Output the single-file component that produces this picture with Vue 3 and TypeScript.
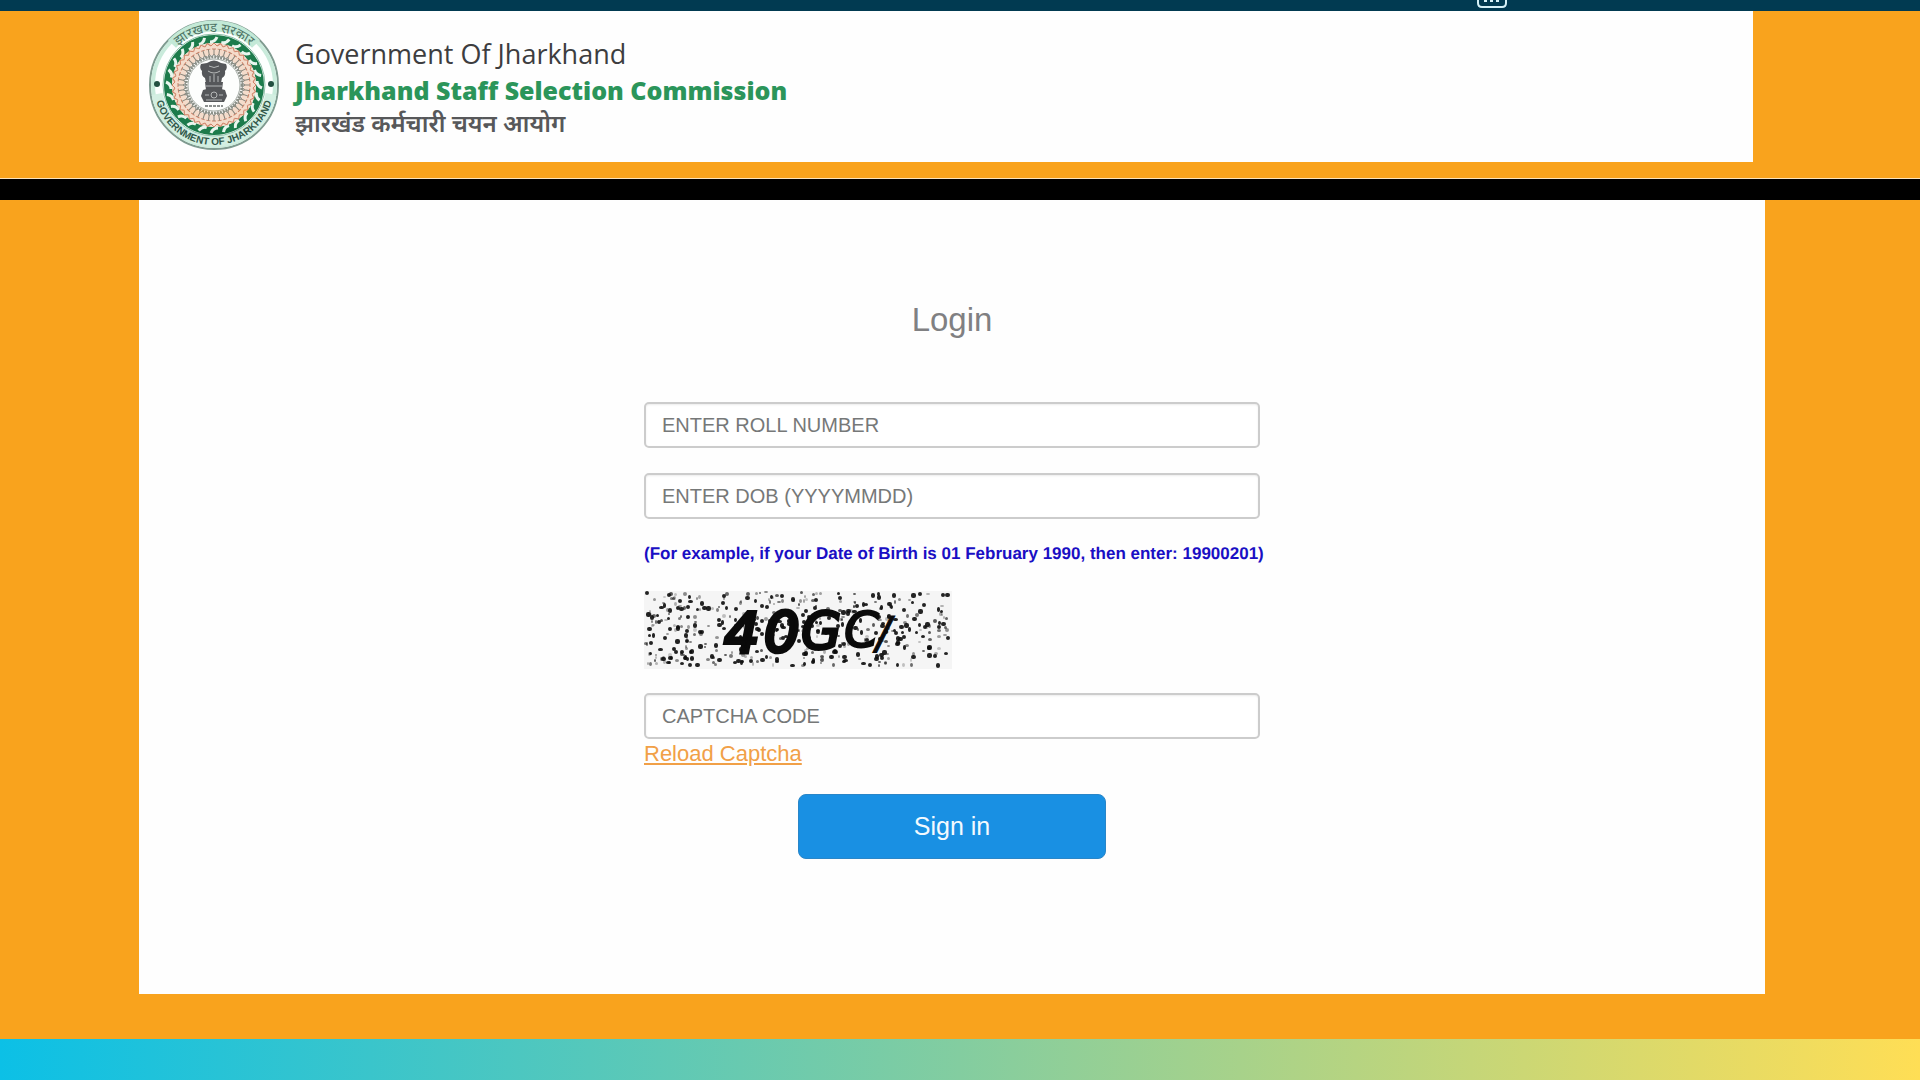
<script setup lang="ts">
import { ref } from 'vue'

interface Speck {
  x: number
  y: number
  w: number
  h: number
  o: number
}

interface Glyph {
  char: string
  x: number
  y: number
  size: number
  stroke: number
}

const roll = ref('')
const dob = ref('')
const code = ref('')

const glyphs: Glyph[] = [
  { char: '4', x: 80, y: 61, size: 56, stroke: 4 },
  { char: '0', x: 120, y: 60, size: 56, stroke: 4 },
  { char: 'G', x: 157, y: 58, size: 52, stroke: 3 },
  { char: 'C', x: 200, y: 56, size: 50, stroke: 2 },
  { char: '/', x: 232, y: 58, size: 44, stroke: 1 },
]

// Noise for the captcha background, from a small seeded generator.
function makeSpecks(seed: number): Speck[] {
  let s = seed
  const next = () => {
    s = (s * 1103515245 + 12345) % 2147483648
    return s / 2147483648
  }
  const list: Speck[] = []
  for (let i = 0; i < 480; i++) {
    const big = next() > 0.55
    list.push({
      x: Math.round(next() * 303),
      y: Math.round(next() * 73),
      w: (big ? 3 : 2) + Math.round(next() * 2),
      h: (big ? 3 : 2) + Math.round(next() * 2),
      o: big ? 0.9 : 0.2 + next() * 0.5,
    })
  }
  return list
}

const seed = ref(4061)
const specks = ref<Speck[]>(makeSpecks(seed.value))

function reload() {
  seed.value += 97
  specks.value = makeSpecks(seed.value)
}

const ticks = Array.from({ length: 24 }, (_, i) => i * 15)
const petals = Array.from({ length: 40 }, (_, i) => i * 9)
</script>

<template>
  <div class="page">
    <div class="topbar">
      <svg class="keypad" width="34" height="11" viewBox="0 0 34 11" aria-hidden="true">
        <path d="M2 -6V3q0 4 4 4H26q4 0 4-4V-6" fill="none" stroke="#d5f1f7" stroke-width="2" />
        <path d="M8 1h3M14 1h3M20 1h3" stroke="#d5f1f7" stroke-width="2" />
      </svg>
    </div>

    <header class="masthead">
      <div class="brand">
        <svg class="seal" viewBox="0 0 132 132" role="img" aria-label="Seal of Jharkhand">
          <defs>
            <path id="arc-top" d="M13 66A53 53 0 0 1 119 66" />
            <path id="arc-bottom" d="M6 66A60 60 0 0 0 126 66" />
          </defs>
          <circle cx="66" cy="66" r="64" fill="#fdfffe" stroke="#7f9b90" stroke-width="2" />
          <circle cx="66" cy="66" r="61" fill="none" stroke="#c9ebdb" stroke-width="4" />
          <path d="M24 25A58 58 0 0 1 108 25" fill="none" stroke="#c3e9d7" stroke-width="11" />
          <path d="M9 75A58 58 0 0 0 123 75" fill="none" stroke="#d3efe2" stroke-width="11" />
          <circle cx="66" cy="66" r="51" fill="none" stroke="#8fc0aa" stroke-width="1" />
          <circle cx="66" cy="66" r="46" fill="#fff" stroke="#1c7b4b" stroke-width="8" />
          <path
            v-for="a in ticks"
            :key="`t${a}`"
            d="M62 23q5 0 7-5"
            fill="none"
            stroke="#e8f6ee"
            stroke-width="3"
            :transform="`rotate(${a} 66 66)`"
          />
          <circle cx="66" cy="66" r="36" fill="none" stroke="#f4dccb" stroke-width="12" />
          <g v-for="a in petals" :key="`p${a}`" :transform="`rotate(${a} 66 66)`" fill="none">
            <path d="M63 27l3-3 3 3M64 30h4" stroke="#cf8166" stroke-width="1" />
            <path d="M66 30v5M64 38l2-3 2 3" stroke="#87847a" stroke-width="1" />
          </g>
          <circle cx="66" cy="66" r="28" fill="none" stroke="#8b9189" stroke-width="3" stroke-dasharray="2 1" />
          <circle cx="66" cy="66" r="26" fill="#fdfefd" stroke="#a9b0aa" stroke-width="1" />
          <g fill="#55575a">
            <path d="M59 44q7-5 14 0l5 1q2 4-1 7 1 5-3 7l-1 5H58l-1-5q-4-2-3-7-3-3-1-7z" />
            <path d="M57 63h18l-1 8H58z" />
            <path d="M55 71q11-4 22 0l2 6-3 6H56l-3-6z" />
          </g>
          <g fill="none" stroke="#b5b8b8" stroke-width="1">
            <path d="M61 47q5 3 10 0M60 52q6 4 12 0M62 57v6M66 55v8M70 57v6M58 67h16M58 81h16" />
            <circle cx="66" cy="76" r="3" />
            <path d="M57 76h4M71 76h4" />
          </g>
          <path d="M57 87h18" stroke="#8d9190" stroke-width="2" stroke-dasharray="3 1" />
          <circle cx="9" cy="65" r="3" fill="#234f40" />
          <circle cx="123" cy="65" r="3" fill="#234f40" />
          <text class="seal-hindi"><textPath href="#arc-top" startOffset="50%" text-anchor="middle">झारखण्ड सरकार</textPath></text>
          <text class="seal-latin"><textPath href="#arc-bottom" startOffset="50%" text-anchor="middle">GOVERNMENT OF JHARKHAND</textPath></text>
        </svg>
        <div class="names">
          <p class="gov">Government Of Jharkhand</p>
          <h1 class="commission">Jharkhand Staff Selection Commission</h1>
          <p class="hindi" lang="hi">झारखंड कर्मचारी चयन आयोग</p>
        </div>
      </div>
    </header>

    <main class="stage">
      <section class="panel">
        <form class="login" @submit.prevent>
          <h2 class="title">Login</h2>
          <input v-model="roll" class="field" type="text" placeholder="ENTER ROLL NUMBER" aria-label="Enter roll number" />
          <input v-model="dob" class="field" type="text" placeholder="ENTER DOB (YYYYMMDD)" aria-label="Enter date of birth" />
          <p class="hint">(For example, if your Date of Birth is 01 February 1990, then enter: 19900201)</p>
          <svg class="captcha" viewBox="0 0 308 78" role="img" aria-label="Captcha">
            <rect width="308" height="78" fill="#f5f5f5" />
            <rect
              v-for="(s, i) in specks"
              :key="i"
              :x="s.x"
              :y="s.y"
              :width="s.w"
              :height="s.h"
              :opacity="s.o"
              rx="2"
              fill="#0c0c0c"
            />
            <text class="glyphs"><tspan
              v-for="g in glyphs"
              :key="g.char"
              :x="g.x"
              :y="g.y"
              :font-size="g.size"
              :stroke-width="g.stroke"
            >{{ g.char }}</tspan></text>
          </svg>
          <input v-model="code" class="field last" type="text" placeholder="CAPTCHA CODE" aria-label="Captcha code" />
          <a class="reload" href="#" @click.prevent="reload">Reload Captcha</a>
          <button class="submit" type="submit">Sign in</button>
        </form>
      </section>
    </main>

    <footer class="ribbon"></footer>
  </div>
</template>

<style>
body {
  margin: 0;
}
</style>

<style scoped>
.page {
  display: flex;
  flex-direction: column;
  min-height: 100vh;
  background: #f9a31d;
  font-family: "Liberation Sans", Arial, sans-serif;
}

.topbar {
  display: flex;
  justify-content: flex-end;
  height: 11px;
  padding-right: 410px;
  background: #013a51;
}

.keypad {
  display: block;
}

.masthead {
  padding: 0 167px 16px 139px;
  border-bottom: 1px solid #fbe3bd;
}

.brand {
  display: flex;
  align-items: center;
  gap: 15px;
  height: 151px;
  box-sizing: border-box;
  padding: 0 9px 4px;
  background: #fefefe;
}

.seal {
  flex: none;
  width: 132px;
  height: 132px;
}

.seal-hindi {
  font-family: "Noto Sans Devanagari", "Noto Sans", sans-serif;
  font-size: 13px;
  fill: #4c7263;
}

.seal-latin {
  font-family: "Liberation Sans", Arial, sans-serif;
  font-size: 10px;
  font-weight: 700;
  fill: #31584a;
}

.names {
  display: flex;
  flex-direction: column;
  padding-top: 10px;
}

.names p,
.names h1 {
  margin: 0;
  white-space: nowrap;
}

.gov {
  font-family: "Open Sans", "Noto Sans", sans-serif;
  font-size: 27px;
  line-height: 36px;
  color: #3d3d3f;
}

.commission {
  font-family: "Open Sans", "Noto Sans", sans-serif;
  font-size: 25px;
  font-weight: 800;
  line-height: 36px;
  color: #2b955a;
}

.hindi {
  font-family: "Noto Sans Devanagari", "Noto Sans", sans-serif;
  font-size: 24px;
  font-weight: 600;
  line-height: 36px;
  color: #57585a;
}

.stage {
  flex: 1;
  display: flex;
  padding: 0 155px 45px 139px;
  border-top: 21px solid #000;
}

.panel {
  flex: 1;
  display: flex;
  justify-content: center;
  align-items: flex-start;
  padding: 100px 24px;
  background: #fefefe;
}

.login {
  display: flex;
  flex-direction: column;
  align-items: flex-start;
  width: 100%;
  max-width: 616px;
}

.title {
  align-self: center;
  margin: 0 0 62px;
  font-size: 33px;
  font-weight: 400;
  line-height: 40px;
  color: #808082;
}

.field {
  box-sizing: border-box;
  width: 100%;
  height: 46px;
  margin: 0 0 25px;
  padding: 0 16px;
  border: 2px solid #ccc;
  border-radius: 5px;
  background: #fff;
  box-shadow: inset 0 1px 2px rgba(0, 0, 0, 0.08);
  font-family: inherit;
  font-size: 20px;
  color: #555;
}

.field::placeholder {
  color: #767878;
  opacity: 1;
}

.field.last {
  margin-bottom: 0;
}

.hint {
  margin: 0 0 27px;
  font-size: 17px;
  font-weight: 700;
  line-height: 20px;
  white-space: nowrap;
  text-rendering: geometricPrecision;
  color: #1a0fc4;
}

.captcha {
  display: block;
  width: 308px;
  height: 78px;
  margin-bottom: 24px;
}

.glyphs {
  font-family: "DejaVu Sans", sans-serif;
  font-style: italic;
  fill: #0a0a0a;
  stroke: #0a0a0a;
}

.reload {
  font-size: 22px;
  line-height: 30px;
  color: #f1a047;
}

.submit {
  align-self: center;
  width: 50%;
  height: 65px;
  margin-top: 25px;
  padding: 0;
  border: 1px solid #2a86c8;
  border-radius: 8px;
  background: #1990e3;
  font-family: inherit;
  font-size: 25px;
  color: #f3faff;
  cursor: pointer;
}

.ribbon {
  height: 41px;
  background: linear-gradient(90deg, #0cc0e6, #83cda0 50%, #ffde55);
}
</style>
